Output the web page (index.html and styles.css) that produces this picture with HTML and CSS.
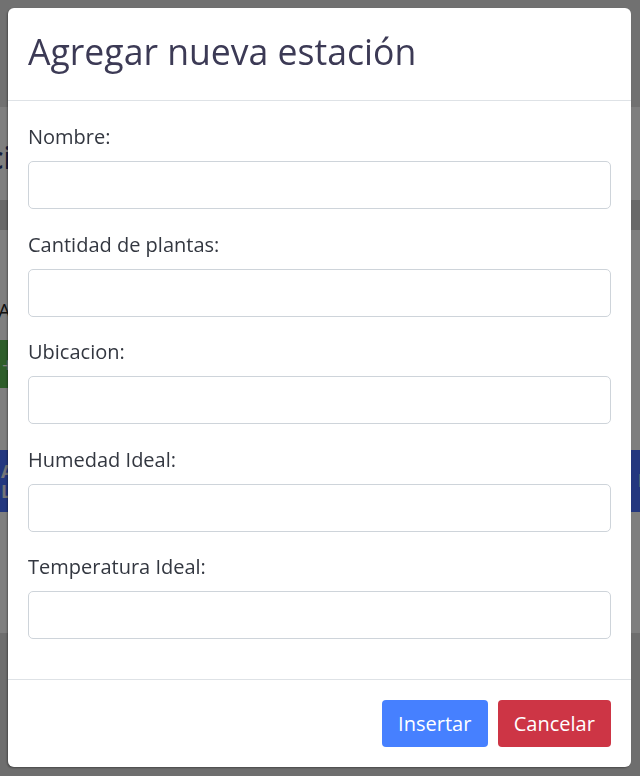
FILE: index.html
```html
<!DOCTYPE html>
<html lang="es">
<head>
<meta charset="utf-8">
<title>Agregar nueva estación</title>
<link rel="stylesheet" href="styles.css">
</head>
<body>
<div class="page">
  <div class="topbar"></div>
  <div class="heading"><h1 class="heading-text">Estaciones</h1></div>
  <div class="band"></div>
  <div class="section">
    <p class="section-text">Agregar</p>
  </div>
  <div class="add-row"><span class="add-btn">+ Agregar</span></div>
  <div class="gap"></div>
  <div class="table-head">
    <div class="th-line">A</div>
    <div class="th-line">L</div>
    <div class="th-right">L</div>
  </div>
  <div class="rows"></div>
  <div class="foot"></div>
</div>
<div class="backdrop"></div>
<div class="modal">
  <div class="modal-header">
    <h2 class="modal-title">Agregar nueva estación</h2>
  </div>
  <form class="modal-body">
    <div class="field">
      <label class="field-label" for="f1">Nombre:</label>
      <input class="field-input" id="f1" type="text">
    </div>
    <div class="field">
      <label class="field-label" for="f2">Cantidad de plantas:</label>
      <input class="field-input" id="f2" type="text">
    </div>
    <div class="field">
      <label class="field-label" for="f3">Ubicacion:</label>
      <input class="field-input" id="f3" type="text">
    </div>
    <div class="field">
      <label class="field-label" for="f4">Humedad Ideal:</label>
      <input class="field-input" id="f4" type="text">
    </div>
    <div class="field">
      <label class="field-label" for="f5">Temperatura Ideal:</label>
      <input class="field-input" id="f5" type="text">
    </div>
  </form>
  <div class="modal-footer">
    <button class="btn btn-primary" type="button">Insertar</button>
    <button class="btn btn-danger" type="button">Cancelar</button>
  </div>
</div>
</body>
</html>
```
FILE: styles.css
```css
* { box-sizing: border-box; }
html, body { margin: 0; padding: 0; }
body {
  font-family: "Open Sans", "DejaVu Sans", sans-serif;
  background: #ffffff;
  width: 640px;
  height: 776px;
  overflow: hidden;
}
.page { display: flex; flex-direction: column; }
.topbar { height: 107px; background: #e2e2e2; }
.heading { height: 93px; background: #ffffff; overflow: hidden; display: flex; align-items: center; padding-top: 8px; }
.heading-text {
  margin: 0;
  font-size: 30px;
  font-weight: 600;
  color: #2a3a7a;
  text-indent: -72px;
  white-space: nowrap;
}
.band { height: 30px; background: #d2d2d2; }
.section { height: 110px; display: flex; align-items: flex-end; padding-bottom: 16px; overflow: hidden; }
.section-text { margin: 0; font-size: 20px; color: #222; white-space: nowrap; text-indent: -2px; }
.add-row { height: 48px; overflow: hidden; }
.add-btn {
  display: flex; align-items: center; height: 48px;
  background: #5cbc54; color: #ffffff; font-size: 20px; padding-left: 2px;
  width: 200px;
}
.gap { height: 62px; }
.table-head {
  height: 62px; background: #466efe; color: #e8e8f0; font-weight: 700; font-size: 18px;
  display: flex; flex-direction: column; justify-content: center; padding-left: 1px;
  position: relative;
}
.th-line { line-height: 20px; }
.th-right { position: absolute; right: -8px; top: 20px; line-height: 20px; }
.rows { height: 121px; }
.foot { height: 143px; background: #dcdcdc; }
.backdrop {
  position: fixed; inset: 0;
  background: rgba(0, 0, 0, 0.5);
}
.modal {
  position: fixed;
  left: 8px; top: 8px;
  width: 623px; height: 759px;
  background: #ffffff;
  border-radius: 6px;
  box-shadow: -1px 1px 2px rgba(0,0,0,0.35);
  display: flex; flex-direction: column;
}
.modal-header {
  padding: 16px 20px 22px;
  border-bottom: 1px solid #dee2e6;
}
.modal-title {
  margin: 0;
  font-size: 35.6px;
  line-height: 54px;
  font-weight: 400;
  color: #3c3a55;
}
.modal-body {
  margin: 0;
  padding: 21px 20px 19.5px;
  flex: 1;
  display: flex; flex-direction: column;
}
.field { display: flex; flex-direction: column; margin-bottom: 20.5px; }
.field-label {
  font-size: 20px;
  line-height: 30px;
  color: #333740;
  margin-bottom: 9px;
}
.field-input {
  height: 48px;
  width: 100%;
  border: 1px solid #ced4da;
  border-radius: 5px;
  background: #ffffff;
  font: inherit;
  font-size: 20px;
  padding: 0 12px;
}
.modal-footer {
  border-top: 1px solid #dee2e6;
  padding: 20px 20px 20px;
  display: flex; justify-content: flex-end; gap: 10px;
}
.btn {
  height: 47px;
  padding: 0 16.2px;
  border: none;
  border-radius: 4px;
  font-family: "Open Sans", "DejaVu Sans", sans-serif;
  font-size: 20px;
  color: #ffffff;
}
.btn-primary { background: #4680ff; }
.btn-danger { background: #cd3545; }
```
